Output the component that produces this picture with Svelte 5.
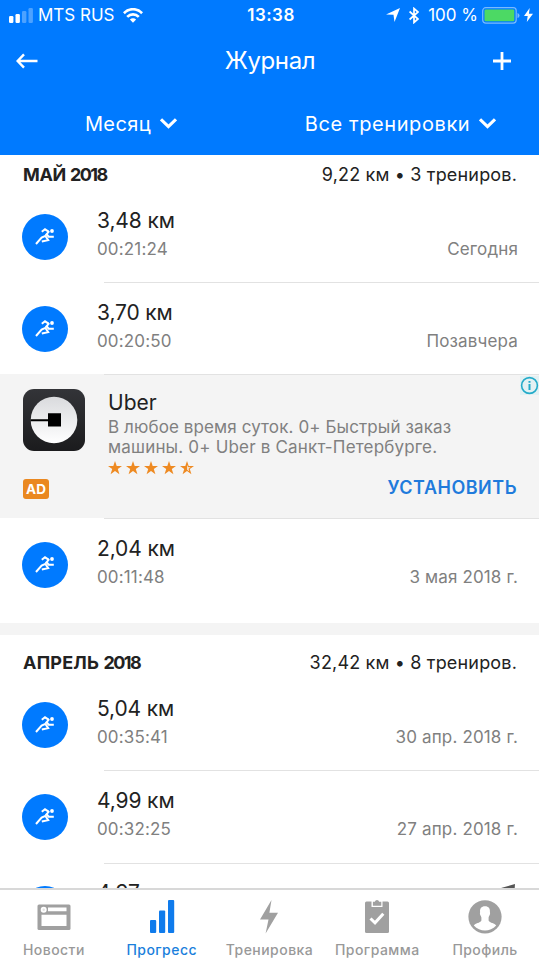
<script lang="ts">
	type Workout = { distance: string; time: string; date: string };

	const may: Workout[] = [
		{ distance: '3,48 км', time: '00:21:24', date: 'Сегодня' },
		{ distance: '3,70 км', time: '00:20:50', date: 'Позавчера' }
	];
	const mayLast: Workout[] = [{ distance: '2,04 км', time: '00:11:48', date: '3 мая 2018 г.' }];
	const april: Workout[] = [
		{ distance: '5,04 км', time: '00:35:41', date: '30 апр. 2018 г.' },
		{ distance: '4,99 км', time: '00:32:25', date: '27 апр. 2018 г.' },
		{ distance: '4,97 км', time: '', date: '' }
	];

	const star = 'M7 0L8.7 5H14L9.8 8.1L11.4 13.2L7 10.1L2.6 13.2L4.2 8.1L0 5H5.3Z';
</script>

{#snippet workoutRow(w: Workout)}
	<div class="row">
		<div class="avatar">
			<svg width="20" height="18" viewBox="0 0 20 18" fill="none" stroke="#fff" stroke-width="2">
				<path d="M6.8 3.8L10 1.3L13.6 3.6" />
				<path d="M14.2 3.2L10.6 7.4M12 6.6L13.6 8.7H18.8" />
				<path d="M11 7.6L6.6 9.6L1 16M10.6 8.2L13.2 12.2L6.8 13.6" />
				<circle cx="17" cy="3" r="1.9" fill="#fff" stroke="none" />
			</svg>
		</div>
		<div class="info">
			<div class="distance">{w.distance}</div>
			<div class="details">
				<span class="time">{w.time}</span>
				<span class="date">{w.date}</span>
			</div>
		</div>
		{#if !w.date}
			<svg class="arrow" width="16" height="16" viewBox="0 0 16 16">
				<path d="M0 4.3L15 0L14 14L9 6Z" fill="#555" />
			</svg>
		{/if}
	</div>
{/snippet}

<div class="screen">
	<header>
		<div class="status">
			<div class="status-left">
				<svg width="24" height="15" viewBox="0 0 24 15" fill="#fff">
					<rect y="8" width="4.4" height="7" rx="1.2" />
					<rect x="6.5" y="6" width="4.4" height="9" rx="1.2" />
					<rect x="13" y="3" width="4.4" height="12" rx="1.2" opacity=".3" />
					<rect x="19.5" width="4.4" height="15" rx="1.2" opacity=".3" />
				</svg>
				<span class="carrier">MTS RUS</span>
				<svg width="20" height="15" viewBox="0 0 20 15" fill="none" stroke="#fff" stroke-width="2.7">
					<path d="M.9 5.2C6-.1 14-.1 19.1 5.2M4.2 8.9C7.5 5.6 12.5 5.6 15.8 8.9" />
					<path d="M6.9 11.6C8.7 9.9 11.3 9.9 13.1 11.6L10 14.7Z" fill="#fff" stroke="none" />
				</svg>
			</div>
			<span class="clock">13:38</span>
			<div class="status-right">
				<svg width="14" height="14" viewBox="0 0 14 14"><path d="M0 6.5L14 0L8.5 14L7.5 6.8Z" fill="#fff" /></svg>
				<svg class="bluetooth" width="10" height="17" viewBox="0 0 10 17" fill="none" stroke="#fff" stroke-width="1.7">
					<path d="M.6 4.5L9 12L5 15.5V1.5L9 5L.6 12.5" />
				</svg>
				<span class="percent">100 %</span>
				<svg width="38" height="17" viewBox="0 0 38 17">
					<rect x=".7" y=".7" width="33.5" height="15.4" rx="3" fill="none" stroke="#79baff" stroke-width="1.2" />
					<rect x="2.5" y="2.5" width="29.8" height="11.8" rx="1.2" fill="#4cd964" />
					<path d="M35.5 6V11Q37.5 10.5 37.5 8.5T35.5 6" fill="#79baff" />
				</svg>
				<svg class="charge" width="9" height="14" viewBox="0 0 9 14"><path d="M5.7 0L0 8H3.7L2.8 14L9 5.7H4.9Z" fill="#fff" /></svg>
			</div>
		</div>
		<div class="navbar">
			<svg width="22" height="16" viewBox="0 0 22 16" fill="none" stroke="#fff" stroke-width="2.4">
				<path d="M21.5 8H1.8M8 1.3L1.6 8L8 14.7" />
			</svg>
			<h1>Журнал</h1>
			<svg width="18" height="18" viewBox="0 0 18 18" fill="none" stroke="#fff" stroke-width="2.8">
				<path d="M9 0V18M0 9H18" />
			</svg>
		</div>
		<div class="filters">
			<div class="filter">
				<span class="period">Месяц</span>
				<svg width="17" height="11" viewBox="0 0 17 11" fill="none" stroke="#fff" stroke-width="3.2"><path d="M1 1.3L8.5 8.6L16 1.3" /></svg>
			</div>
			<div class="filter">
				<span class="kind">Все тренировки</span>
				<svg width="17" height="11" viewBox="0 0 17 11" fill="none" stroke="#fff" stroke-width="3.2"><path d="M1 1.3L8.5 8.6L16 1.3" /></svg>
			</div>
		</div>
	</header>

	<main>
		<div class="month">
			<h2>МАЙ <span class="year">2018</span></h2>
			<span class="total">9,22 км • 3 трениров.</span>
		</div>
		{#each may as w}
			{@render workoutRow(w)}
		{/each}

		<div class="ad">
			<div class="ad-side">
				<svg width="62" height="62" viewBox="0 0 62 62">
					<defs>
						<linearGradient id="disc" x2="0" y2="1">
							<stop stop-color="#d9dadd" />
							<stop offset="1" stop-color="#fff" />
						</linearGradient>
						<linearGradient id="tile" x2="0" y2="1">
							<stop stop-color="#333438" />
							<stop offset="1" stop-color="#1b1b1d" />
						</linearGradient>
					</defs>
					<rect width="62" height="62" rx="11" fill="url(#tile)" />
					<circle cx="31" cy="31" r="23.3" fill="url(#disc)" />
					<path d="M7.5 30.2H25V24.3H38V37.5H25V32.2H7.5Z" fill="#000" />
				</svg>
				<span class="badge">AD</span>
			</div>
			<div class="ad-body">
				<div class="ad-title">Uber</div>
				<p><span class="line1">В любое время суток. 0+ Быстрый заказ</span><br /><span class="line2">машины. 0+ Uber в Санкт-Петербурге.</span></p>
				<div class="stars">
					{#each [1, 2, 3, 4] as _}
						<svg width="14" height="14" viewBox="0 0 14 14"><path d={star} fill="#ee8a22" /></svg>
					{/each}
					<svg width="14" height="14" viewBox="0 0 14 14">
						<path d={star} fill="#ee8a22" />
						<path d="M7.2 3.8L8.1 6.2H10.6L8.4 7.8L9.2 10.2L7.2 8.8Z" fill="#f4f4f4" />
					</svg>
				</div>
				<span class="install">УСТАНОВИТЬ</span>
			</div>
			<svg class="ad-info" width="19" height="19" viewBox="0 0 19 19">
				<rect width="19" height="19" fill="#e3f1f3" />
				<circle cx="9.5" cy="9.5" r="7.9" fill="none" stroke="#24abc9" stroke-width="1.6" />
				<path d="M8.5 5H10.5V6.8H8.5ZM8.5 8H10.5V14H8.5Z" fill="#24abc9" />
			</svg>
		</div>

		{#each mayLast as w}
			{@render workoutRow(w)}
		{/each}
		<div class="gap"></div>
		<div class="month next">
			<h2 class="long">АПРЕЛЬ <span class="year">2018</span></h2>
			<span class="total">32,42 км • 8 трениров.</span>
		</div>
		{#each april as w}
			{@render workoutRow(w)}
		{/each}
	</main>

	<nav>
		<div class="tab">
			<svg width="34" height="34" viewBox="0 0 34 34">
				<rect x=".5" y="4.5" width="33" height="25.5" rx="1.5" fill="#a0a0a0" />
				<path d="M4.5 14.7H29.5V26H4.5ZM11 7.5H29.5V11.3H11Z" fill="#fff" />
				<circle cx="6.7" cy="9.7" r="3" fill="#fff" />
				<circle cx="6.7" cy="9.7" r="1.2" fill="#e4e4e4" />
			</svg>
			<span>Новости</span>
		</div>
		<div class="tab active">
			<svg width="34" height="34" viewBox="0 0 34 34" fill="#0f7bec">
				<rect x="5" y="20" width="6.2" height="13" rx="1" />
				<rect x="14" y="10.5" width="6.2" height="22.5" rx="1" />
				<rect x="23" y="0" width="6.2" height="33" rx="1" />
			</svg>
			<span>Прогресс</span>
		</div>
		<div class="tab">
			<svg width="34" height="34" viewBox="0 0 34 34"><path d="M19.5 0L8 19.5H16.5L13.6 33.5L26 12.8H17.4Z" fill="#a0a0a0" /></svg>
			<span>Тренировка</span>
		</div>
		<div class="tab">
			<svg width="34" height="34" viewBox="0 0 34 34">
				<rect x="5" y="1.5" width="24" height="31.5" rx="1.5" fill="#a0a0a0" />
				<path d="M11.5 0H22.5V7H11.5Z" fill="#fff" />
				<path d="M12.9 1.8H14.8Q15.3 0 17 0T19.2 1.8H21.3V5.7H12.9Z" fill="#a0a0a0" />
				<path d="M10.5 18.5L15 22.8L23.3 13.8" fill="none" stroke="#fff" stroke-width="3" />
			</svg>
			<span>Программа</span>
		</div>
		<div class="tab">
			<svg width="34" height="34" viewBox="0 0 34 34">
				<circle cx="17" cy="16.8" r="16.6" fill="#a0a0a0" />
				<path d="M17 6.2C20.7 6.2 22.3 8.5 21.9 12C22.6 14.8 21.2 15.2 20.6 17.5V20.5C22 23.3 26.7 23 28.2 25.5C22 32.3 12 32.3 5.8 25.5C7.3 23 12 23.3 13.4 20.5V17.5C12.8 15.2 11.4 14.8 12.1 12C11.7 8.5 13.3 6.2 17 6.2Z" fill="#fff" />
			</svg>
			<span>Профиль</span>
		</div>
	</nav>
</div>

<style>
	:global(body) {
		margin: 0;
		background: #fff;
	}

	.screen {
		display: flex;
		flex-direction: column;
		width: 539px;
		height: 960px;
		overflow: hidden;
		font-family: Inter, 'Liberation Sans', sans-serif;
		color: #222;
		white-space: nowrap;
	}

	svg {
		display: block;
		flex: none;
	}

	h1,
	h2,
	p {
		margin: 0;
		font-weight: 400;
	}

	header {
		flex: none;
		height: 155px;
		background: #007aff;
		color: #fff;
	}

	.status {
		display: grid;
		grid-template-columns: 1fr auto 1fr;
		align-items: center;
		height: 30px;
		padding: 0 6px 0 9px;
		font-size: 17px;
		line-height: 20px;
	}

	.status-left,
	.status-right {
		display: flex;
		align-items: center;
	}

	.status-left {
		gap: 5px;
	}

	.carrier {
		margin-right: 3px;
	}

	.clock {
		font-weight: 600;
		letter-spacing: 0.5px;
	}

	.status-right {
		justify-content: flex-end;
	}

	.bluetooth {
		margin: 0 9px 0 9px;
	}

	.percent {
		margin-right: 4px;
	}

	.charge {
		margin-left: 4px;
	}

	.navbar {
		display: grid;
		grid-template-columns: 1fr auto 1fr;
		align-items: center;
		height: 62px;
		padding: 0 28px 0 16px;
	}

	.navbar svg:last-child {
		justify-self: end;
	}

	h1 {
		padding-left: 13px;
		font-size: 24px;
		line-height: 30px;
		letter-spacing: -0.4px;
	}

	.filters {
		display: grid;
		grid-template-columns: 262px 277px;
		height: 63px;
		font-size: 20px;
		line-height: 26px;
	}

	.filter {
		display: flex;
		align-items: center;
		justify-content: center;
		gap: 9px;
	}

	.period {
		letter-spacing: 0.4px;
	}

	.kind {
		letter-spacing: 0.6px;
	}

	main {
		flex: none;
		height: 733px;
		overflow: hidden;
	}

	.month {
		display: flex;
		align-items: center;
		justify-content: space-between;
		box-sizing: border-box;
		height: 35px;
		padding: 4px 22px 0 23px;
		line-height: 24px;
	}

	.month.next {
		height: 43.5px;
		padding-top: 13px;
	}

	h2 {
		font-size: 18px;
		font-weight: 700;
		letter-spacing: -0.3px;
	}

	h2.long {
		letter-spacing: 0.2px;
	}

	.year {
		letter-spacing: -1.6px;
	}

	.total {
		font-size: 18px;
		letter-spacing: 0.17px;
	}

	.row {
		display: flex;
		box-sizing: border-box;
		height: 92px;
	}

	.next ~ .row {
		height: 92.4px;
	}

	.avatar {
		display: flex;
		flex: none;
		align-items: center;
		justify-content: center;
		width: 46px;
		height: 46px;
		margin: 23.6px 29px 0 22px;
		border-radius: 50%;
		background: #007aff;
	}

	.info {
		flex: 1;
		padding: 16.5px 21px 0 0;
	}

	.distance {
		font-size: 21px;
		line-height: 28px;
		letter-spacing: -0.12px;
	}

	.details {
		display: flex;
		justify-content: space-between;
		margin-top: 2.5px;
		font-size: 17px;
		line-height: 24px;
		letter-spacing: 0.15px;
		color: #808080;
	}

	.row + .row,
	.ad,
	.ad + .row {
		background-image: linear-gradient(#e2e2e2, #e2e2e2);
		background-repeat: no-repeat;
		background-size: 435px 1px;
		background-position: 104px 0;
	}

	.arrow {
		margin: 21px 23px 0 0;
	}

	.ad {
		position: relative;
		display: flex;
		height: 144px;
		background-color: #f4f4f4;
	}

	.ad + .row {
		height: 104.5px;
	}

	.ad-side {
		width: 85px;
		padding: 15px 0 0 23px;
		box-sizing: border-box;
	}

	.badge {
		display: block;
		width: 26px;
		margin-top: 27.5px;
		border-radius: 3px;
		background: #ea8820;
		color: #fff;
		font-size: 13.5px;
		font-weight: 700;
		line-height: 20px;
		text-align: center;
	}

	.ad-body {
		display: flex;
		flex: 1;
		flex-direction: column;
		padding: 15px 22px 0 23px;
	}

	.ad-title {
		font-size: 21px;
		line-height: 28px;
	}

	p {
		font-size: 17px;
		line-height: 20px;
		color: #808080;
	}

	.line1 {
		letter-spacing: 0.11px;
	}

	.line2 {
		letter-spacing: 0.18px;
	}

	.stars {
		display: flex;
		gap: 4px;
		margin-top: 4px;
	}

	.install {
		align-self: flex-end;
		margin-top: 1px;
		font-size: 18px;
		font-weight: 600;
		line-height: 24px;
		letter-spacing: 0.5px;
		color: #1f7bdc;
	}

	.ad-info {
		position: absolute;
		top: 2px;
		right: 0;
	}

	.gap {
		height: 12px;
		background: #f4f4f4;
	}

	nav {
		display: grid;
		grid-template-columns: repeat(5, 107.8px);
		flex: none;
		height: 72px;
		box-sizing: border-box;
		border-top: 2px solid #d8d8d8;
		background: #fff;
	}

	.tab {
		display: flex;
		flex-direction: column;
		align-items: center;
		padding-top: 10px;
		color: #999;
		font-size: 14px;
		font-weight: 500;
		line-height: 18px;
		letter-spacing: 0.45px;
	}

	.tab span {
		margin-top: 7px;
	}

	.active {
		color: #1b7fdc;
	}
</style>
